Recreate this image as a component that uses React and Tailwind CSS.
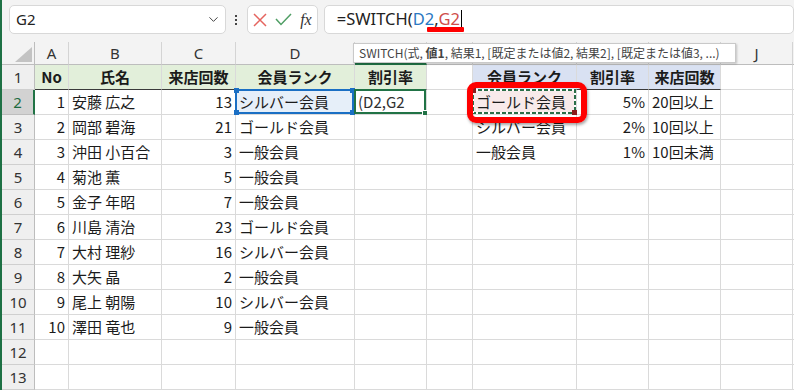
import { ChevronDown } from 'lucide-react';

const jp = "font-['Noto_Sans_CJK_JP',sans-serif]";

const letters = ['A', 'B', 'C', 'D', 'E', 'F', 'G', 'H', 'I', 'J', ''];

const members = [
    [1, '安藤 広之', 13, 'シルバー会員'],
    [2, '岡部 碧海', 21, 'ゴールド会員'],
    [3, '沖田 小百合', 3, '一般会員'],
    [4, '菊池 薫', 5, '一般会員'],
    [5, '金子 年昭', 7, '一般会員'],
    [6, '川島 清治', 23, 'ゴールド会員'],
    [7, '大村 理紗', 16, 'シルバー会員'],
    [8, '大矢 晶', 2, '一般会員'],
    [9, '尾上 朝陽', 10, 'シルバー会員'],
    [10, '澤田 竜也', 9, '一般会員'],
];

const ranks = [
    ['ゴールド会員', '5%', '20回以上'],
    ['シルバー会員', '2%', '10回以上'],
    ['一般会員', '1%', '10回未満'],
];

function Cell({ children, align = 'left', className = '' }) {
    const just = align === 'right' ? 'justify-end' : align === 'center' ? 'justify-center' : 'justify-start';
    return (
        <div className={`relative h-[25px] border-r border-b border-[#dadada] flex items-center px-[3px] whitespace-nowrap text-[15px] text-[#1b1b1b] ${just} ${className}`}>
            {children}
        </div>
    );
}

function RowHead({ n, active }) {
    return (
        <div className={`h-[25px] border-r border-b flex items-center justify-center text-[15px] font-['Noto_Sans',sans-serif] ${active ? 'bg-[#d2d2d2] text-[#1e6b40] border-r-[#217346] border-r-2 border-b-[#bdbdbd]' : 'bg-[#efefef] text-[#333] border-[#cfcfcf] border-r-[#bdbdbd]'}`}>
            {n}
        </div>
    );
}

function Corners({ color }) {
    const sq = `absolute w-[5px] h-[5px] ${color}`;
    return (
        <>
            <span className={`${sq} -left-[3px] -top-[3px]`} />
            <span className={`${sq} -right-[3px] -top-[3px]`} />
            <span className={`${sq} -left-[3px] -bottom-[3px]`} />
            <span className={`${sq} -right-[3px] -bottom-[3px]`} />
        </>
    );
}

// copy-range "marching ants" border
function Ants() {
    const h = 'absolute h-[2px] bg-[repeating-linear-gradient(90deg,#2b6e48_0_4px,#ffffff_4px_6px)]';
    const v = 'absolute w-[2px] bg-[repeating-linear-gradient(180deg,#2b6e48_0_4px,#ffffff_4px_6px)]';
    return (
        <div className="absolute -left-[1px] -top-[1px] right-0 bottom-0">
            <span className={`${h} left-0 right-0 top-0`} />
            <span className={`${h} left-0 right-0 bottom-0`} />
            <span className={`${v} top-0 bottom-0 left-0`} />
            <span className={`${v} top-0 bottom-0 right-0`} />
            <span className="absolute -left-[1px] -top-[1px] w-[5px] h-[5px] bg-[#8b1c1c]" />
            <span className="absolute -right-[1px] -bottom-[1px] w-[5px] h-[5px] bg-[#8b1c1c]" />
        </div>
    );
}

function Row({ r }) {
    const m = members[r - 2];
    const k = ranks[r - 2];
    const hd = 'font-bold bg-[#e2efda] border-b-[#3a3a3a]';
    const hb = 'font-bold bg-[#d9e1f2] border-b-[#3a3a3a]';
    if (r === 1) {
        return (
            <>
                <RowHead n={r} />
                <Cell align="center" className={hd}>No</Cell>
                <Cell align="center" className={hd}>氏名</Cell>
                <Cell align="center" className={hd}>来店回数</Cell>
                <Cell align="center" className={hd}>会員ランク</Cell>
                <Cell align="center" className={hd}>割引率</Cell>
                <Cell />
                <Cell align="center" className={hb}>会員ランク</Cell>
                <Cell align="center" className={hb}>割引率</Cell>
                <Cell align="center" className={hb}>来店回数</Cell>
                <Cell />
                <Cell />
            </>
        );
    }
    return (
        <>
            <RowHead n={r} active={r === 2} />
            <Cell align="right">{m ? m[0] : ''}</Cell>
            <Cell>{m ? m[1] : ''}</Cell>
            <Cell align="right">{m ? m[2] : ''}</Cell>
            <Cell className={r === 2 ? 'bg-[#e6eff9]' : ''}>
                {m ? m[3] : ''}
                {r === 2 && (
                    <div className="absolute -left-[1px] -top-[1px] right-0 bottom-0 border-2 border-[#1a6fc4]">
                        <Corners color="bg-[#1a6fc4]" />
                    </div>
                )}
            </Cell>
            <Cell>
                {r === 2 && (
                    <>
                        <span className="text-[#303030]">(D2,G2</span>
                        <div className="absolute -left-[1px] -top-[1px] right-0 bottom-0 border-2 border-[#217346]">
                            <span className="absolute -right-[4px] -bottom-[4px] w-[6px] h-[6px] bg-[#217346] border border-white" />
                        </div>
                    </>
                )}
            </Cell>
            <Cell />
            <Cell className={r === 2 ? 'bg-[#f8eaea]' : ''}>
                {k ? k[0] : ''}
                {r === 2 && <Ants />}
            </Cell>
            <Cell align="right">{k ? k[1] : ''}</Cell>
            <Cell>{k ? k[2] : ''}</Cell>
            <Cell />
            <Cell />
        </>
    );
}

export default function App() {
    const rows = [1, 2, 3, 4, 5, 6, 7, 8, 9, 10, 11, 12, 13];
    return (
        <div className={`relative w-[794px] h-[390px] overflow-hidden bg-white border-l-2 border-[#1e7145] ${jp}`}>
            {/* toolbar */}
            <div className="h-[42px] bg-[#f3f3f3] flex items-start pt-[5px] pl-[7px] font-['Noto_Sans',sans-serif]">
                <div className="w-[221px] h-[29px] rounded-[5px] border border-[#d8d8d8] bg-white flex items-center justify-between pl-[6px] pr-[4px]">
                    <span className="text-[15px] text-[#222]">G2</span>
                    <ChevronDown size={15} strokeWidth={1.6} className="text-[#444]" />
                </div>
                <div className="w-[22px] h-[29px] flex flex-col items-center justify-center gap-[2px]">
                    <span className="w-[2px] h-[2px] bg-[#444]" />
                    <span className="w-[2px] h-[2px] bg-[#444]" />
                    <span className="w-[2px] h-[2px] bg-[#444]" />
                </div>
                <div className="w-[72px] h-[29px] rounded-[5px] border border-[#d8d8d8] bg-white flex items-center pl-[5px] gap-[8px]">
                    <svg width="14" height="14" viewBox="0 0 14 14">
                        <path d="M1 1 L13 13 M13 1 L1 13" stroke="#e5645f" strokeWidth="1.5" fill="none" />
                    </svg>
                    <svg width="17" height="13" viewBox="0 0 17 13">
                        <path d="M1 6 L6 11.5 L16 1" stroke="#4f9e64" strokeWidth="1.5" fill="none" />
                    </svg>
                    <span className="font-['Liberation_Serif',serif] italic text-[16px] text-[#333] leading-none">fx</span>
                </div>
                <div className="ml-[6px] w-[480px] h-[29px] rounded-[5px] border border-[#d8d8d8] bg-white flex items-center pl-[12px] text-[16.5px] text-[#222]">
                    <span>=SWITCH(</span>
                    <span className="text-[#2a78c2]">D2</span>
                    <span>,</span>
                    <span className="text-[#cf4d4a]">G2</span>
                    <span className="ml-[1px] w-[1px] h-[20px] bg-black" />
                </div>
            </div>

            {/* sheet */}
            <div className="grid grid-cols-[33px_34px_93px_74px_119px_72px_46px_104px_72px_72px_72px_1fr]">
                <div className="h-[23px] bg-[#f3f3f3] border-r border-b border-[#bdbdbd] flex items-end justify-end pr-[2px] pb-[2px]">
                    <svg width="17" height="15" viewBox="0 0 17 15">
                        <polygon points="17,0 17,15 0,15" fill="#c3c3c3" />
                    </svg>
                </div>
                {letters.map((l, i) => (
                    <div
                        key={i}
                        className={`h-[23px] bg-[#f3f3f3] border-r border-[#d4d4d4] flex items-center justify-center text-[15px] font-['Noto_Sans',sans-serif] ${l === 'E' ? 'border-b-2 border-b-[#217346] text-[#1e6b40]' : 'border-b border-b-[#bdbdbd] text-[#333]'}`}
                    >
                        {l}
                    </div>
                ))}
                {rows.map((r) => (
                    <Row key={r} r={r} />
                ))}
            </div>

            {/* formula hint tooltip */}
            <div className="absolute left-[351px] top-[43px] w-[383px] h-[20px] bg-white border border-[#c9c9c9] shadow-[1px_1px_2px_rgba(0,0,0,0.2)] flex items-center pl-[5px] text-[12px] text-[#444] whitespace-pre">
                <span>
                    SWITCH(式, <b className="font-bold">値1</b>, 結果1, [既定または値2, 結果2], [既定または値3, ...)
                </span>
            </div>

            {/* annotations */}
            <div className="absolute left-[425px] top-[27px] w-[37px] h-[5px] bg-[#ff0000] rounded-[1px]" />
            <div className="absolute left-[465px] top-[82px] w-[120px] h-[41px] border-[6px] border-[#ff0000] rounded-[9px] shadow-[1px_2px_3px_rgba(0,0,0,0.35)]" />
        </div>
    );
}
